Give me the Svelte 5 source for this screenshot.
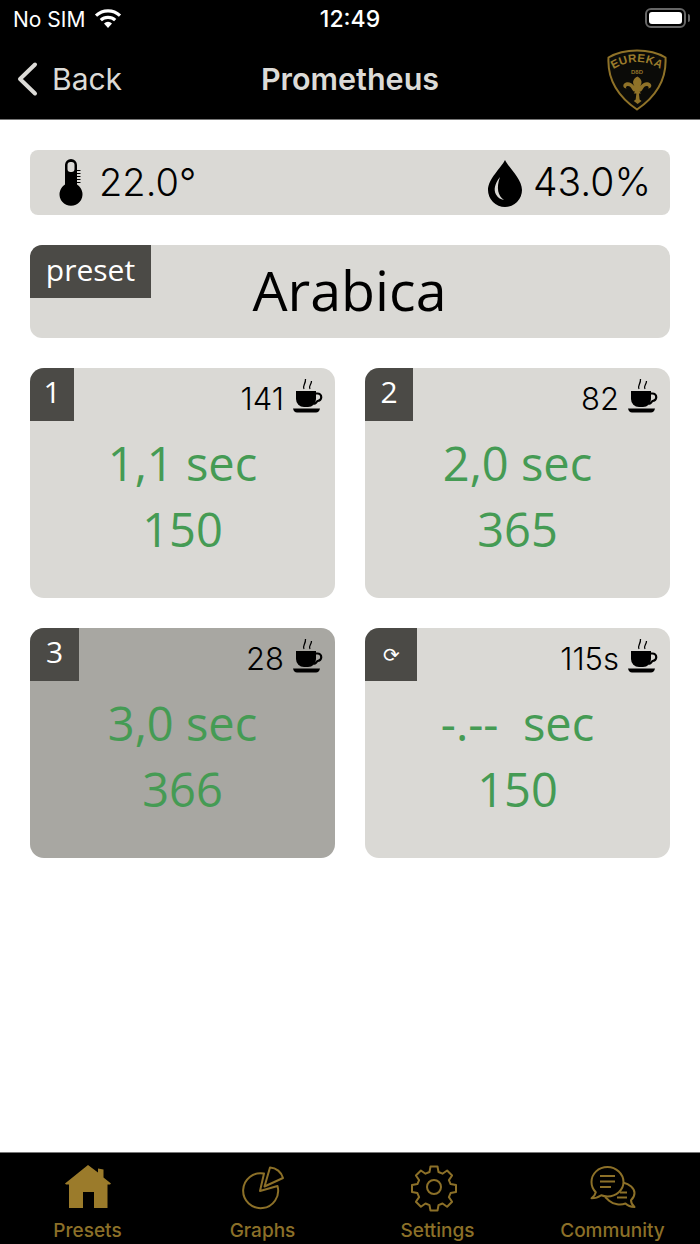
<script>
  const cards = [
    { tag: '1', tagClass: 'w1', count: '141', time: '1,1 sec', value: '150' },
    { tag: '2', tagClass: 'w2', count: '82', time: '2,0 sec', value: '365' },
    { tag: '3', tagClass: 'w3', count: '28', time: '3,0 sec', value: '366', active: true },
    { tag: '⟳', tagClass: 'w4', count: '115s', time: '-.--\u00a0 sec', value: '150' }
  ];
</script>

<div class="page">
  <header class="top">
    <div class="status">
      <div class="status-left">
        <span>No SIM</span>
        <svg class="wifi" viewBox="0 0 28 20" width="28" height="20" aria-hidden="true">
          <path d="M14 19l-4-4.600a6 6 0 0 1 8 0z" fill="#fff"/>
          <path d="M6.800 11.200a10.500 10.500 0 0 1 14.400 0M2 6.600a17.500 17.500 0 0 1 24 0" fill="none" stroke="#fff" stroke-width="3.200"/>
        </svg>
      </div>
      <span class="clock">12:49</span>
      <div class="battery"><span class="battery-fill"></span><span class="battery-cap"></span></div>
    </div>
    <nav class="nav">
      <div class="back">
        <svg viewBox="0 0 24 36" width="24" height="36" aria-hidden="true">
          <path d="M20 3.500L5 18l15 14.500" fill="none" stroke="#dcdbd7" stroke-width="4" stroke-linecap="round" stroke-linejoin="round"/>
        </svg>
        <span>Back</span>
      </div>
      <h1>Prometheus</h1>
      <svg class="logo" viewBox="0 0 62 62" width="62" height="62" aria-hidden="true">
        <path d="M31 1.500C41 1.500 52 4 59.500 8.500C60.500 26 55 44 31 60.500C7 44 1.500 26 2.500 8.500C10 4 21 1.500 31 1.500Z" fill="#0b0b08" stroke="#8f7228" stroke-width="2"/>
        <defs><path id="arc" d="M6 21Q31 5 56 21"/></defs>
        <text class="logo-title"><textPath href="#arc" startOffset="50%" text-anchor="middle">EUREKA</textPath></text>
        <text class="logo-sub" x="31" y="25" text-anchor="middle">D8D</text>
        <g transform="translate(31 0) scale(1.300 1) translate(-31 0)">
          <path d="M31 27c3.500 3 4.500 6 2.500 10 2-3.500 4.500-4.500 6.500-3.500 3 1.500 2.500 6-.5 6 1.500-2-1-3.500-2.500-2-1.500 1.500-1.500 3.500-3 5h-1l1 2h-1.500l.5 6 1.500 1.500-3 3-3-3 1.500-1.500.5-6H28.500l1-2h-1c-1.500-1.500-1.500-3.500-3-5-1.500-1.500-4 0-2.500 2-3 0-3.500-4.500-.5-6 2-1 4.500 0 6.500 3.500-2-4-1-7 2.500-10z" fill="#8f7228"/>
        </g>
      </svg>
    </nav>
  </header>

  <main class="content">
    <section class="panel sensors">
      <div class="reading">
        <svg viewBox="0 0 26 48" width="26" height="48" aria-hidden="true">
          <path d="M6 6a6 6 0 0 1 12 0v19.500a11.500 11.500 0 1 1-12 0z" fill="#000"/>
          <rect x="8.500" y="3" width="7" height="10" rx="3" fill="#dad9d5"/>
          <path d="M18 11.500h3.500M18 14.500h3.500M18 17.500h3.500M18 20.500h3.500M18 23.500h3.500" stroke="#000" stroke-width="1.200"/>
        </svg>
        <span>22.0°</span>
      </div>
      <div class="reading humid">
        <svg viewBox="0 0 36 48" width="36" height="48" aria-hidden="true">
          <path d="M18 1C22 9 35 20 35 31A17 17 0 0 1 1 31C1 20 14 9 18 1Z" fill="#000"/>
          <path d="M13 18C7.500 25 6.500 31 9 35.500C10.500 38.500 13.500 40.500 17 41C11 37 9 29 13 18Z" fill="#dad9d5"/>
        </svg>
        <span>43.0%</span>
      </div>
    </section>

    <section class="panel preset">
      <span class="tag preset-tag">preset</span>
      <span class="preset-name">Arabica</span>
    </section>

    <section class="grid">
      {#each cards as card}
        <article class="panel card" class:active={card.active}>
          <span class="tag {card.tagClass}">{card.tag}</span>
          <div class="count">
            <span>{card.count}</span>
            <svg viewBox="0 0 30 36" width="30" height="36" aria-hidden="true">
              <path d="M11 11c-2-3 2-5 1.500-10M17 11c-2-3 1.500-4 1.500-8" fill="none" stroke="#000" stroke-width="1.300"/>
              <path d="M3 13h20v8a8 8 0 0 1-8 8h-4a8 8 0 0 1-8-8z" fill="#000"/>
              <path d="M23 15.500h1.500a3.500 3.500 0 0 1 0 7.500 8 8 0 0 1-3.500 3" fill="none" stroke="#000" stroke-width="2.200"/>
              <path d="M0 30.500h27c-.5 2.500-2 4-4 4H4c-2 0-3.500-1.500-4-4z" fill="#000"/>
            </svg>
          </div>
          <p class="time">{card.time}</p>
          <p class="value">{card.value}</p>
        </article>
      {/each}
    </section>
  </main>

  <footer class="tabs">
    <div class="tab">
      <svg viewBox="0 0 46 44" width="46" height="44" aria-hidden="true">
        <path d="M23 0L33 7.500V3.500L38.500 4.500V12.500L46 18.500L45 19.500H42.500V43H29V27H18V43H4V19.500H1L0 18.500Z" fill="#9b7b2b"/>
      </svg>
      <span>Presets</span>
    </div>
    <div class="tab">
      <svg viewBox="0 0 42 44" width="42" height="44" fill="none" stroke="#8c7028" stroke-width="2" stroke-linejoin="round" aria-hidden="true">
        <path d="M22 8.500A17.500 17.500 0 1 0 35.500 21L18 26Z"/>
        <path d="M28 2.500L22.500 21.500L41 13A14 14 0 0 0 28 2.500Z"/>
      </svg>
      <span>Graphs</span>
    </div>
    <div class="tab">
      <svg viewBox="4 0 44 44" width="44" height="44" fill="none" stroke="#8c7028" stroke-width="2" stroke-linejoin="round" aria-hidden="true">
        <path d="M18.500 1.500h7l1 5.500 4 1.700 4.600-3.200 5 5-3.200 4.600 1.700 4 5.400 1v7l-5.400 1-1.700 4 3.200 4.600-5 5-4.600-3.200-4 1.700-1 5.400h-7l-1-5.400-4-1.700-4.600 3.200-5-5 3.200-4.600-1.700-4-5.400-1v-7l5.400-1 1.700-4-3.200-4.600 5-5 4.600 3.200 4-1.700z"/>
        <circle cx="22" cy="22" r="7"/>
      </svg>
      <span>Settings</span>
    </div>
    <div class="tab">
      <svg viewBox="0 0 46 44" width="46" height="44" fill="none" stroke="#8c7028" stroke-width="2" stroke-linejoin="round" aria-hidden="true">
        <path d="M17.500 2C8.500 2 1.500 8.700 1.500 17c0 4 1.600 7.600 4.300 10.200-.5 2.300-2 4.400-4.300 6 3.700 0 7.200-1.200 9.700-3 2 .800 4 1.200 6.300 1.200 8.800 0 16-6.500 16-14.400S26.300 2 17.500 2z"/>
        <path d="M33 17.500c6.500 1.500 11.500 5.500 11.500 10.500 0 3-1.500 5.500-3.500 7.200 0 2.300 1.300 4.800 3.500 6.800-3.800-.2-7-1.500-9-3.500-5 2-12 1-16-2.500-1.500-1.300-3-3-4.500-4"/>
        <path d="M10 11h15M10 16.500h15M10 22h11M30 27.500h7M27 32.500h10" stroke-width="2.200"/>
      </svg>
      <span>Community</span>
    </div>
  </footer>
</div>

<style>
  :global(body) { margin: 0; background: #fff; }
  .page {
    width: 700px;
    height: 1244px;
    display: flex;
    flex-direction: column;
    font-family: "Open Sans", "Noto Sans", sans-serif;
    color: #000;
    overflow: hidden;
  }
  .top {
    height: 120px;
    box-sizing: border-box;
    background: #000;
    border-bottom: 1px solid #777;
    flex: none;
    display: flex;
    flex-direction: column;
  }
  .status {
    height: 38px;
    display: grid;
    grid-template-columns: 1fr auto 1fr;
    align-items: center;
    padding: 0 13px;
    font-family: Inter, sans-serif;
    color: #fff;
  }
  .status-left { display: flex; align-items: center; gap: 9px; font-size: 21px; }
  .wifi { margin-top: -1px; }
  .clock { font-weight: 500; font-size: 23px; }
  .battery {
    justify-self: end;
    width: 41px;
    height: 20px;
    border: 2px solid #666;
    border-radius: 6px;
    box-sizing: border-box;
    padding: 2px;
    display: flex;
    position: relative;
    left: -1px;
    top: -1px;
  }
  .battery-fill { flex: 1; background: #fff; border-radius: 3px; }
  .battery-cap {
    position: absolute;
    right: -6px;
    top: 4px;
    width: 2px;
    height: 8px;
    background: #666;
    border-radius: 0 2px 2px 0;
  }
  .nav {
    flex: 1;
    display: grid;
    grid-template-columns: 1fr auto 1fr;
    align-items: center;
    padding: 0 15px;
    color: #dcdbd7;
    font-family: Inter, sans-serif;
  }
  .back { display: flex; align-items: center; gap: 13px; font-size: 30px; }
  .back svg { margin-top: 1px; }
  .nav h1 { margin: 0; font-size: 30.500px; font-weight: 600; }
  .logo { justify-self: end; margin-right: 17px; margin-top: 2px; }
  .logo-title { font: 700 11.500px "Liberation Sans", sans-serif; fill: #9b7b2b; letter-spacing: .3px; }
  .logo-sub { font: 700 6px "Liberation Sans", sans-serif; fill: #8f7228; }

  .content {
    flex: 1;
    padding: 30px;
    display: flex;
    flex-direction: column;
    gap: 30px;
  }
  .panel {
    background: #dad9d5;
    border-radius: 10px;
    position: relative;
    overflow: hidden;
  }
  .sensors {
    height: 65px;
    display: flex;
    justify-content: space-between;
    align-items: center;
    padding: 0 19px 0 29px;
    font-family: Inter, sans-serif;
    font-size: 38px;
    font-weight: 300;
    border-radius: 8px;
  }
  .reading { display: flex; align-items: center; gap: 14px; }
  .reading.humid { gap: 10px; font-size: 39px; }
  .reading span { margin-top: -2px; }
  .tag {
    position: absolute;
    left: 0;
    top: 0;
    background: #4b4a46;
    color: #fff;
    display: flex;
    align-items: center;
    justify-content: center;
    box-sizing: border-box;
    height: 53px;
    font-size: 30px;
    padding-bottom: 6px;
  }
  .preset {
    height: 93px;
    display: flex;
    justify-content: center;
    align-items: center;
    border-radius: 12px;
  }
  .preset-tag { width: 121px; font-size: 30px; padding-bottom: 5px; }
  .preset-name { font-size: 55.500px; margin-top: -4px; margin-left: -1px; }
  .grid {
    display: grid;
    grid-template-columns: 305px 305px;
    grid-auto-rows: 230px;
    gap: 30px;
  }
  .card { text-align: center; border-radius: 14px; }
  .card.active { background: #a8a7a2; }
  .w1 { width: 44px; }
  .w2 { width: 48px; }
  .w3 { width: 49px; }
  .w4 { width: 52px; font-size: 20px; padding-bottom: 0; }
  .count {
    position: absolute;
    top: 9px;
    right: 12px;
    display: flex;
    align-items: center;
    gap: 9px;
    font-family: Inter, sans-serif;
    font-size: 31px;
    font-weight: 300;
  }
  .count span { margin-top: 3px; }
  .count svg { margin-top: -2px; }
  .time, .value {
    margin: 0;
    color: #459b54;
    font-size: 47px;
    line-height: 65px;
  }
  .time { padding-top: 65px; margin-top: -2px; }
  .value { margin-top: 1px; }
  .tabs {
    height: 92px;
    flex: none;
    box-sizing: border-box;
    background: #000;
    border-top: 1px solid #777;
    display: grid;
    grid-template-columns: repeat(4, 1fr);
  }
  .tab {
    display: flex;
    flex-direction: column;
    align-items: center;
    padding-top: 12px;
    color: #8c7028;
    font-family: Inter, sans-serif;
    font-size: 19px;
    font-weight: 500;
  }
  .tab span { margin-top: 10px; }
  .tab svg { display: block; overflow: visible; }
</style>
